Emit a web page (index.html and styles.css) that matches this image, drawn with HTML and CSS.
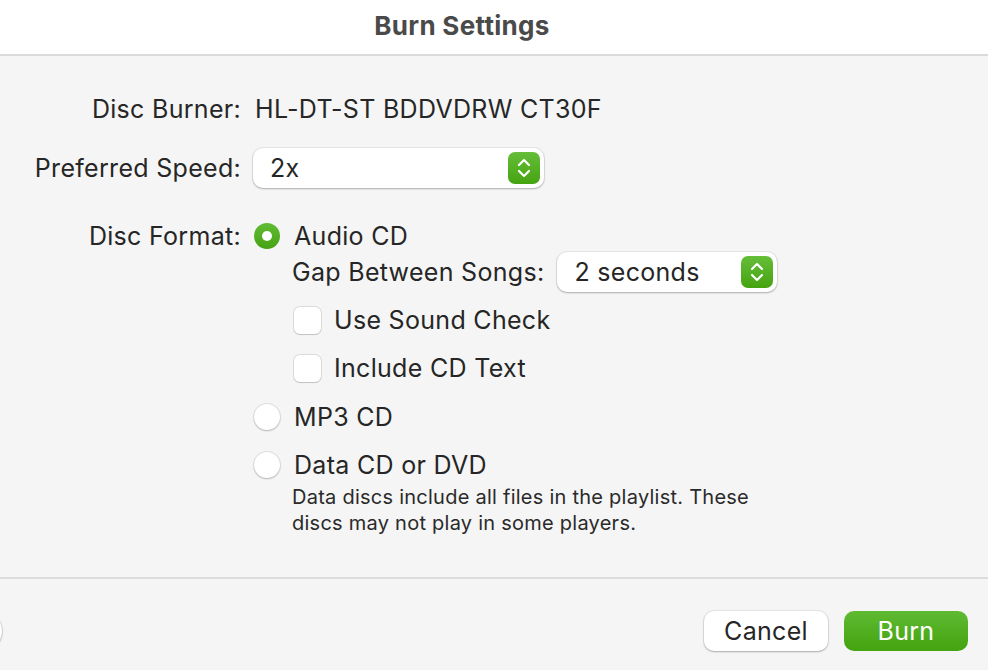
FILE: index.html
```html
<!DOCTYPE html>
<html lang="en">
<head>
    <meta charset="UTF-8">
    <meta name="viewport" content="width=device-width, initial-scale=1.0">
    <title>Burn Settings</title>
    <link rel="stylesheet" href="styles.css">
</head>
<body>
    <div class="title-bar">Burn Settings</div>

    <div class="content">
        <div class="row row-burner">
            <div class="label">Disc Burner:</div>
            <div class="value">HL-DT-ST BDDVDRW CT30F</div>
        </div>

        <div class="row row-speed">
            <div class="label">Preferred Speed:</div>
            <div class="popup popup-speed">
                <span>2x</span>
                <span class="stepper">
                    <svg width="16" height="22" viewBox="0 0 16 22"><path d="M3 8l5-5 5 5M3 14l5 5 5-5" fill="none" stroke="#fff" stroke-width="2.2" stroke-linecap="round" stroke-linejoin="round"/></svg>
                </span>
            </div>
        </div>

        <div class="row row-format">
            <div class="label">Disc Format:</div>
            <div class="options">
                <div class="option">
                    <span class="radio checked"></span>
                    <span>Audio CD</span>
                </div>
                <div class="gap-row">
                    <span>Gap Between Songs:</span>
                    <div class="popup popup-gap">
                        <span>2 seconds</span>
                        <span class="stepper">
                            <svg width="16" height="22" viewBox="0 0 16 22"><path d="M3 8l5-5 5 5M3 14l5 5 5-5" fill="none" stroke="#fff" stroke-width="2.2" stroke-linecap="round" stroke-linejoin="round"/></svg>
                        </span>
                    </div>
                </div>
                <div class="check-row check-first">
                    <span class="checkbox"></span>
                    <span>Use Sound Check</span>
                </div>
                <div class="check-row">
                    <span class="checkbox"></span>
                    <span>Include CD Text</span>
                </div>
                <div class="option option-tall">
                    <span class="radio"></span>
                    <span>MP3 CD</span>
                </div>
                <div class="option option-data">
                    <span class="radio"></span>
                    <span>Data CD or DVD</span>
                </div>
                <p class="note">Data discs include all files in the playlist. These<br>discs may not play in some players.</p>
            </div>
        </div>
    </div>

    <div class="footer">
        <span class="help"></span>
        <div class="buttons">
            <button class="btn btn-cancel">Cancel</button>
            <button class="btn btn-burn">Burn</button>
        </div>
    </div>
</body>
</html>
```

FILE: styles.css
```css
body {
    font-family: 'Inter', 'Noto Sans', sans-serif;
    background: #f5f5f5;
    margin: 0;
    padding: 0;
    color: #262626;
    width: 988px;
    height: 670px;
    overflow: hidden;
    font-size: 25px;
    letter-spacing: 0.3px;
}
.title-bar {
    height: 54px;
    background: #fff;
    border-bottom: 2px solid #dadada;
    text-align: center;
    line-height: 52px;
    font-weight: 700;
    font-size: 26px;
    color: #4a4a4a;
    padding-right: 64px;
}
.content {
    padding-top: 33px;
    height: 488px;
    border-bottom: 2px solid #dcdcdc;
}
.row {
    display: flex;
    align-items: center;
}
.label {
    width: 241px;
    padding-right: 13px;
    box-sizing: content-box;
    text-align: right;
    flex-shrink: 0;
}
.row-burner {
    height: 40px;
}
.row-burner .value {
    padding-left: 1px;
}
.row-speed {
    height: 40px;
    margin-top: 19px;
}
.row-format {
    align-items: flex-start;
    margin-top: 32px;
}
.row-format .label {
    line-height: 32px;
}
.options {
    display: flex;
    flex-direction: column;
}
.popup {
    display: flex;
    align-items: center;
    justify-content: space-between;
    background: #fff;
    border-radius: 10px;
    box-shadow: 0 0 0 1px rgba(0, 0, 0, 0.06), 0 1px 2px rgba(0, 0, 0, 0.25);
    box-sizing: border-box;
    padding: 0 4px 0 17px;
    margin-left: -1px;
}
.popup-speed {
    width: 291px;
    height: 40px;
}
.popup-gap {
    width: 220px;
    height: 40px;
    margin-left: 13px;
}
.stepper {
    width: 32px;
    height: 32px;
    border-radius: 7px;
    background: linear-gradient(#66be39, #45a310);
    display: flex;
    align-items: center;
    justify-content: center;
}
.option {
    display: flex;
    align-items: center;
    height: 32px;
}
.option-tall {
    height: 50px;
}
.option-data {
    height: 44px;
    margin-top: 1px;
}
.radio {
    width: 26px;
    height: 26px;
    border-radius: 50%;
    box-sizing: border-box;
    background: #fff;
    box-shadow: 0 0 0 1px rgba(0, 0, 0, 0.08), 0 1px 2px rgba(0, 0, 0, 0.2);
    margin-right: 14px;
    flex-shrink: 0;
    position: relative;
}
.radio.checked {
    background: linear-gradient(#62bb35, #45a312);
    box-shadow: none;
}
.radio.checked::after {
    content: "";
    position: absolute;
    left: 8px;
    top: 8px;
    width: 10px;
    height: 10px;
    border-radius: 50%;
    background: #fff;
}
.gap-row {
    display: flex;
    align-items: center;
    height: 40px;
    margin-left: 38px;
}
.check-row {
    display: flex;
    align-items: center;
    height: 48px;
    margin-left: 40px;
}
.check-first {
    margin-top: 4px;
}
.checkbox {
    width: 27px;
    height: 27px;
    border-radius: 6px;
    background: #fff;
    box-shadow: 0 0 0 1px rgba(0, 0, 0, 0.1), 0 1px 1px rgba(0, 0, 0, 0.12);
    margin-right: 13px;
}
.note {
    margin: -3px 0 0 38px;
    font-size: 20px;
    line-height: 26px;
    color: #2a2a2a;
    letter-spacing: 0.25px;
}
.footer {
    display: flex;
    justify-content: space-between;
    align-items: center;
    height: 90px;
    padding-right: 20px;
}
.help {
    width: 40px;
    height: 40px;
    border-radius: 50%;
    background: #fff;
    box-shadow: 0 0 0 1px rgba(0, 0, 0, 0.08), 0 1px 2px rgba(0, 0, 0, 0.25);
    margin-left: -38px;
    margin-top: 14px;
}
.buttons {
    display: flex;
    gap: 16px;
    margin-top: 14px;
}
.btn {
    width: 124px;
    height: 40px;
    border: none;
    border-radius: 10px;
    font-family: inherit;
    font-size: 25px;
    letter-spacing: 0.3px;
    padding: 0;
}
.btn-cancel {
    background: #fff;
    color: #262626;
    box-shadow: 0 0 0 1px rgba(0, 0, 0, 0.06), 0 1px 2px rgba(0, 0, 0, 0.25);
}
.btn-burn {
    background: linear-gradient(#5fba32, #44a30f);
    color: #fff;
}
```
